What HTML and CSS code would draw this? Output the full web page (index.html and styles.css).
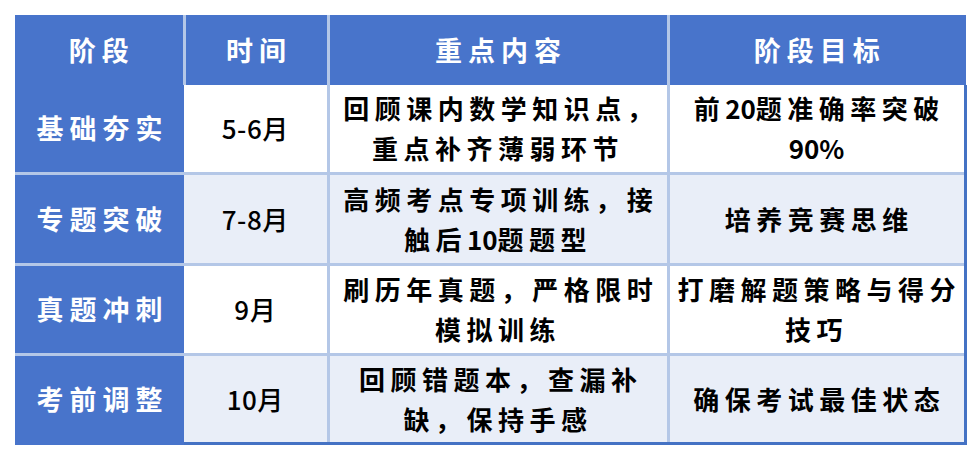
FILE: index.html
```html
<!DOCTYPE html>
<html lang="zh">
<head>
<meta charset="utf-8">
<link rel="stylesheet" href="styles.css">
</head>
<body>
<table class="plan">
  <colgroup>
    <col class="c1"><col class="c2"><col class="c3"><col class="c4">
  </colgroup>
  <thead>
    <tr class="head">
      <th class="stage">阶段</th>
      <th>时间</th>
      <th>重点内容</th>
      <th>阶段目标</th>
    </tr>
  </thead>
  <tbody>
    <tr class="r1 odd">
      <th class="stage">基础夯实</th>
      <td>5-6月</td>
      <td>回顾课内数学知识点，<br>重点补齐薄弱环节</td>
      <td>前<span class="num">20</span>题准确率突破<br><span class="num">90%</span></td>
    </tr>
    <tr class="r2 even">
      <th class="stage">专题突破</th>
      <td>7-8月</td>
      <td>高频考点专项训练，接<br>触后<span class="num">10</span>题题型</td>
      <td>培养竞赛思维</td>
    </tr>
    <tr class="r3 odd">
      <th class="stage">真题冲刺</th>
      <td>9月</td>
      <td>刷历年真题，严格限时<br>模拟训练</td>
      <td>打磨解题策略与得分<br>技巧</td>
    </tr>
    <tr class="r4 even">
      <th class="stage">考前调整</th>
      <td>10月</td>
      <td>回顾错题本，查漏补<br>缺，保持手感</td>
      <td>确保考试最佳状态</td>
    </tr>
  </tbody>
</table>
</body>
</html>
```
FILE: styles.css
```css
html, body {
  margin: 0;
  padding: 0;
  background: #ffffff;
}
body {
  padding: 15px 0 0 15px;
  font-family: "Noto Sans CJK SC", "Noto Sans", sans-serif;
}
.plan {
  border-collapse: collapse;
  table-layout: fixed;
  width: 950px;
}
.c1 { width: 169px; }
.c2 { width: 144px; }
.c3 { width: 340px; }
.c4 { width: 297px; }

.plan th, .plan td {
  padding: 0;
  text-align: center;
  vertical-align: middle;
  font-weight: 700;
  font-size: 26px;
  line-height: 40px;
}
.head th {
  height: 70px;
  background: #4874cb;
  color: #ffffff;
  font-size: 27px;
  letter-spacing: 6px;
  text-indent: 6px;
  border-left: 3px solid #b4c7e7;
}
.head th.stage { border-left: none; }
.head th:last-child { border-right: 2px solid #4874cb; }

tbody th.stage {
  background: #4874cb;
  color: #ffffff;
  font-size: 27px;
  letter-spacing: 6px;
  text-indent: 6px;
  border-top: 3px solid #b4c7e7;
}
tbody tr.r1 th.stage { border-top: none; }
tbody td {
  color: #000000;
  letter-spacing: 5.5px;
  text-indent: 5.5px;
  border-top: 3px solid #b4c7e7;
  border-left: 3px solid #b4c7e7;
}
.num { letter-spacing: 0; }
tbody tr.r1 td { border-top: none; }
tbody td:nth-child(2) {
  border-left: none;
  letter-spacing: 0.5px;
  text-indent: 0;
  font-weight: 500;
}
tbody td:last-child { border-right: 3px solid #4472c4; }
tbody tr.r4 td { border-bottom: 3px solid #4472c4; }
tbody tr.r4 th.stage { border-bottom: 3px solid #4874cb; }
tr.odd td { background: #ffffff; }
tr.even td { background: #e9eef8; }
tr.r1 { height: 88px; }
tr.r2 { height: 91px; }
tr.r3 { height: 90px; }
tr.r4 { height: 89px; }
```
